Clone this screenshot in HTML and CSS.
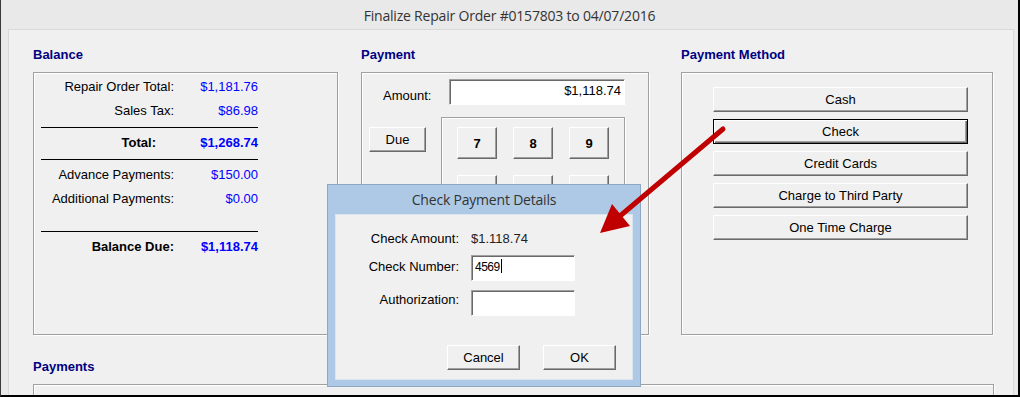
FILE: index.html
```html
<!DOCTYPE html>
<html lang="en">
<head>
    <meta charset="UTF-8">
    <meta name="viewport" content="width=device-width, initial-scale=1.0">
    <title>Finalize Repair Order</title>
    <link rel="stylesheet" href="styles.css">
</head>
<body>
    <div class="window">
        <div class="titlebar">Finalize Repair Order #0157803 to 04/07/2016</div>
        <div class="client">
            <div class="columns">
                <section class="group group-balance">
                    <h2 class="group-title">Balance</h2>
                    <div class="group-box">
                        <div class="balance-list">
                            <span class="lbl">Repair Order Total:</span><span class="val">$1,181.76</span>
                            <span class="lbl">Sales Tax:</span><span class="val">$86.98</span>
                            <div class="rule"></div>
                            <span class="lbl strong total-lbl">Total:</span><span class="val strong">$1,268.74</span>
                            <div class="rule"></div>
                            <span class="lbl">Advance Payments:</span><span class="val">$150.00</span>
                            <span class="lbl">Additional Payments:</span><span class="val">$0.00</span>
                            <div class="rule rule-gap"></div>
                            <span class="lbl strong">Balance Due:</span><span class="val strong">$1,118.74</span>
                        </div>
                    </div>
                </section>

                <section class="group group-payment">
                    <h2 class="group-title">Payment</h2>
                    <div class="group-box payment-box">
                        <div class="amount-row">
                            <span class="amount-lbl">Amount:</span>
                            <div class="field amount-field">$1,118.74</div>
                        </div>
                        <div class="pad-row">
                            <button class="btn due-btn">Due</button>
                            <div class="keypad">
                                <button class="btn key">7</button>
                                <button class="btn key">8</button>
                                <button class="btn key">9</button>
                                <button class="btn key">4</button>
                                <button class="btn key">5</button>
                                <button class="btn key">6</button>
                                <button class="btn key">1</button>
                                <button class="btn key">2</button>
                                <button class="btn key">3</button>
                                <button class="btn key">0</button>
                                <button class="btn key">.</button>
                                <button class="btn key">C</button>
                            </div>
                        </div>
                    </div>
                </section>

                <section class="group group-method">
                    <h2 class="group-title">Payment Method</h2>
                    <div class="group-box method-box">
                        <button class="btn method-btn">Cash</button>
                        <button class="btn method-btn is-default">Check</button>
                        <button class="btn method-btn">Credit Cards</button>
                        <button class="btn method-btn">Charge to Third Party</button>
                        <button class="btn method-btn">One Time Charge</button>
                    </div>
                </section>
            </div>

            <section class="group group-payments">
                <h2 class="group-title">Payments</h2>
                <div class="group-box payments-box"></div>
            </section>
        </div>

        <div class="dialog">
            <div class="dialog-title">Check Payment Details</div>
            <div class="dialog-body">
                <div class="dialog-form">
                    <span class="d-lbl">Check Amount:</span><span class="d-val">$1.118.74</span>
                    <span class="d-lbl">Check Number:</span><div class="field d-field">4569<span class="caret"></span></div>
                    <span class="d-lbl">Authorization:</span><div class="field d-field"></div>
                </div>
                <div class="dialog-buttons">
                    <button class="btn dlg-btn">Cancel</button>
                    <button class="btn dlg-btn">OK</button>
                </div>
            </div>
        </div>

        <svg class="arrow" width="145" height="125" viewBox="0 0 145 125">
            <line x1="133" y1="9" x2="30" y2="96" stroke="#c00000" stroke-width="5" stroke-linecap="round"/>
            <polygon points="10,113 22,84 40,106" fill="#c00000"/>
        </svg>
    </div>
</body>
</html>
```

FILE: styles.css
```css
body {
    margin: 0;
    padding: 0;
    font-family: "Liberation Sans", Arial, sans-serif;
    font-size: 13px;
    color: #000;
    background-color: #fff;
}
.window {
    position: relative;
    width: 1020px;
    height: 397px;
    box-sizing: border-box;
    background-color: #e9e9e9;
    border-left: 1px solid #3a3a3a;
    border-right: 2px solid #000;
    border-bottom: 2px solid #000;
    overflow: hidden;
}
.titlebar {
    height: 29px;
    line-height: 31px;
    text-align: center;
    font-family: "Open Sans", "Noto Sans", sans-serif;
    font-size: 14px;
    color: #333;
    letter-spacing: -0.2px;
}
.client {
    margin-left: 7px;
    width: 1006px;
    height: 400px;
    box-sizing: border-box;
    border: 1px solid #d9d9d9;
    background-color: #f0f0f0;
    padding: 17px 0 0 24px;
}
.columns {
    display: flex;
}
.group-title {
    margin: 0 0 9px 0;
    font-size: 13px;
    line-height: 16px;
    font-weight: bold;
    color: #000080;
}
.group-box {
    box-sizing: border-box;
    height: 263px;
    border: 1px solid #a0a0a0;
    box-shadow: 1px 1px 0 #fff, inset 1px 1px 0 #fff;
}
.group-balance {
    width: 305px;
}
.group-payment {
    width: 288px;
    margin-left: 23px;
}
.group-method {
    width: 312px;
    margin-left: 32px;
}

/* balance */
.balance-list {
    display: grid;
    grid-template-columns: 133px 84px;
    margin: 2px 0 0 7px;
    width: 217px;
}
.lbl, .val {
    height: 24px;
    line-height: 24px;
    white-space: nowrap;
}
.lbl {
    text-align: right;
}
.val {
    text-align: right;
    color: #0000ff;
}
.strong {
    font-weight: bold;
}
.total-lbl {
    padding-right: 18px;
}
.rule {
    grid-column: 1 / 3;
    height: 1px;
    background-color: #000;
    margin: 4px 0 3px 0;
}
.rule-gap {
    margin-top: 20px;
}

/* buttons */
.btn {
    box-sizing: border-box;
    font-family: "Liberation Sans", Arial, sans-serif;
    font-size: 13px;
    color: #000;
    background-color: #f0f0f0;
    border: 1px solid;
    border-color: #fff #696969 #696969 #fff;
    box-shadow: inset -1px -1px 0 #a0a0a0;
    padding: 0;
    cursor: pointer;
}

/* payment */
.payment-box {
    padding: 6px 0 0 21px;
}
.amount-row {
    display: flex;
    align-items: flex-start;
}
.amount-lbl {
    width: 66px;
    padding-top: 9px;
}
.field {
    box-sizing: border-box;
    background-color: #fff;
    border: 1px solid;
    border-color: #a0a0a0 #fff #fff #a0a0a0;
    box-shadow: inset 1px 1px 0 #696969;
}
.amount-field {
    width: 176px;
    height: 26px;
    line-height: 22px;
    text-align: right;
    padding-right: 3px;
}
.pad-row {
    display: flex;
    align-items: flex-start;
    margin: 12px 0 0 -14px;
}
.due-btn {
    width: 57px;
    height: 25px;
    margin-top: 10px;
}
.keypad {
    box-sizing: border-box;
    margin-left: 15px;
    width: 184px;
    display: grid;
    grid-template-columns: repeat(3, 40px);
    gap: 16px;
    padding: 9px 0 10px 15px;
    border: 1px solid #a0a0a0;
    box-shadow: 1px 1px 0 #fff, inset 1px 1px 0 #fff;
}
.key {
    height: 32px;
    font-weight: bold;
}

/* payment method */
.method-box {
    display: flex;
    flex-direction: column;
    gap: 7px;
    padding: 14px 0 0 31px;
}
.method-btn {
    width: 255px;
    height: 25px;
}
.method-btn.is-default {
    border-color: #000;
    box-shadow: inset 1px 1px 0 #fff, inset -1px -1px 0 #696969, inset -2px -2px 0 #a0a0a0;
}

/* payments */
.group-payments {
    margin-top: 24px;
}
.payments-box {
    width: 961px;
}

/* dialog */
.dialog {
    position: absolute;
    left: 326px;
    top: 184px;
    width: 314px;
    height: 203px;
    box-sizing: border-box;
    background-color: #adc9e6;
    border: 1px solid #8ea8c4;
    padding: 0 7px 6px 7px;
    display: flex;
    flex-direction: column;
}
.dialog-title {
    height: 29px;
    line-height: 30px;
    text-align: center;
    font-family: "Open Sans", "Noto Sans", sans-serif;
    font-size: 14px;
    color: #333;
    letter-spacing: -0.2px;
}
.dialog-body {
    flex: 1;
    background-color: #f0f0f0;
    border: 1px solid #dbe5ef;
    padding-top: 11px;
}
.dialog-form {
    display: grid;
    grid-template-columns: 123px 104px;
    column-gap: 12px;
    row-gap: 3px;
}
.d-lbl {
    text-align: right;
    line-height: 26px;
    height: 26px;
}
.d-val {
    line-height: 26px;
    color: #222;
}
.d-field {
    height: 26px;
    line-height: 22px;
    padding-left: 3px;
    font-size: 12px;
    letter-spacing: -0.5px;
}
.dialog-form .d-lbl:nth-of-type(3),
.dialog-form .d-field:last-child {
    margin-top: 3px;
}
.dialog-form .d-lbl:nth-of-type(3) {
    line-height: 18px;
}
.caret {
    display: inline-block;
    width: 1px;
    height: 14px;
    background-color: #000;
    vertical-align: -2px;
    margin-left: 1px;
}
.dialog-buttons {
    display: flex;
    justify-content: flex-end;
    gap: 23px;
    margin: 29px 16px 0 0;
}
.dlg-btn {
    width: 73px;
    height: 25px;
}

.arrow {
    position: absolute;
    left: 589px;
    top: 120px;
}
```
